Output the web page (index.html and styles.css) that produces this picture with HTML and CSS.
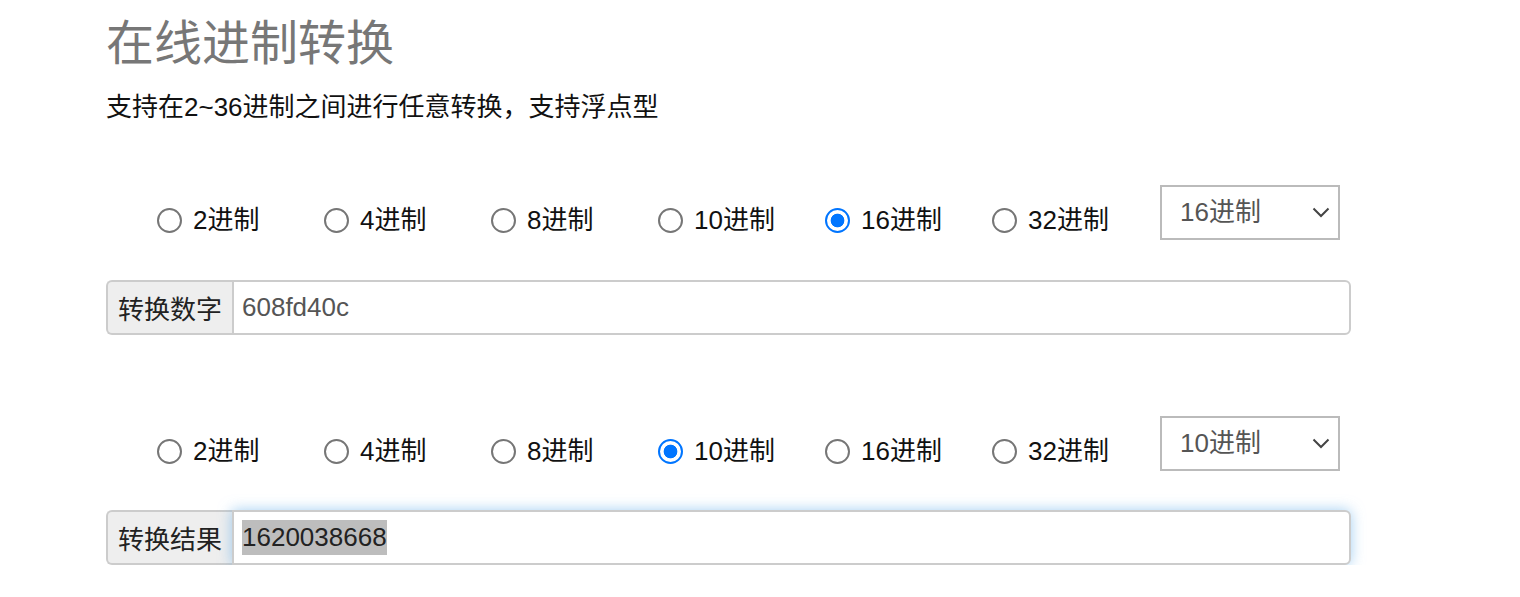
FILE: index.html
```html
<!DOCTYPE html>
<html lang="zh-CN">
<head>
  <meta charset="UTF-8" />
  <meta name="viewport" content="width=device-width, initial-scale=1.0"/>
  <title>在线进制转换</title>
  <link rel="stylesheet" href="styles.css">
</head>
<body>

  <div class="converter">
    <h1 class="title">在线进制转换</h1>
    <p class="lead">支持在2~36进制之间进行任意转换，支持浮点型</p>

    <div class="base-row">
      <label class="base-option"><input type="radio" name="from" value="2" /> 2进制</label>
      <label class="base-option"><input type="radio" name="from" value="4" /> 4进制</label>
      <label class="base-option"><input type="radio" name="from" value="8" /> 8进制</label>
      <label class="base-option"><input type="radio" name="from" value="10" /> 10进制</label>
      <label class="base-option"><input type="radio" name="from" value="16" checked /> 16进制</label>
      <label class="base-option"><input type="radio" name="from" value="32" /> 32进制</label>
      <div class="select-wrap">
        <select id="fromBase">
          <option value="2">2进制</option>
          <option value="8">8进制</option>
          <option value="10">10进制</option>
          <option value="16" selected>16进制</option>
          <option value="32">32进制</option>
        </select>
        <svg class="chevron" width="18" height="11" viewBox="0 0 18 11"><path d="M1.5 1.5 L9 9 L16.5 1.5" fill="none" stroke="#444" stroke-width="2"/></svg>
      </div>
    </div>

    <div class="input-group">
      <span class="addon">转换数字</span>
      <input type="text" id="number" class="field" value="608fd40c" />
    </div>

    <div class="base-row base-row-to">
      <label class="base-option"><input type="radio" name="to" value="2" /> 2进制</label>
      <label class="base-option"><input type="radio" name="to" value="4" /> 4进制</label>
      <label class="base-option"><input type="radio" name="to" value="8" /> 8进制</label>
      <label class="base-option"><input type="radio" name="to" value="10" checked /> 10进制</label>
      <label class="base-option"><input type="radio" name="to" value="16" /> 16进制</label>
      <label class="base-option"><input type="radio" name="to" value="32" /> 32进制</label>
      <div class="select-wrap">
        <select id="toBase">
          <option value="2">2进制</option>
          <option value="8">8进制</option>
          <option value="10" selected>10进制</option>
          <option value="16">16进制</option>
          <option value="32">32进制</option>
        </select>
        <svg class="chevron" width="18" height="11" viewBox="0 0 18 11"><path d="M1.5 1.5 L9 9 L16.5 1.5" fill="none" stroke="#444" stroke-width="2"/></svg>
      </div>
    </div>

    <div class="input-group input-group-result">
      <span class="addon">转换结果</span>
      <input type="text" id="result" class="field" value="1620038668" />
    </div>
  </div>

  <script>
    const resultEl = document.getElementById("result");
    resultEl.focus();
    resultEl.select();
  </script>
</body>
</html>
```

FILE: styles.css
```css
body {
  margin: 0;
  background: #fff;
  font-family: "Liberation Sans", "Noto Sans CJK SC", sans-serif;
  color: #111;
}

.converter {
  width: 1245px;
  padding-left: 106px;
}

.title {
  margin: 15px 0 0;
  font-size: 48px;
  line-height: 58px;
  font-weight: normal;
  color: #777;
}

.lead {
  margin: 16px 0 0;
  font-size: 26px;
  line-height: 36px;
  color: #111;
}

.base-row {
  display: flex;
  align-items: flex-start;
  margin-top: 60px;
  padding-left: 51px;
  height: 55px;
}

.base-row-to {
  margin-top: 81px;
}

.base-option {
  display: flex;
  align-items: center;
  gap: 11px;
  width: 167px;
  flex-shrink: 0;
  margin-top: 17px;
  font-size: 26px;
  line-height: 36px;
  color: #111;
}

.base-option input {
  appearance: none;
  width: 25px;
  height: 25px;
  margin: 0;
  border: 2px solid #767676;
  border-radius: 50%;
  background: #fff;
  box-sizing: border-box;
}

.base-option input:checked {
  border-color: #0075ff;
  background: radial-gradient(circle, #0075ff 0 6.5px, #fff 7.2px);
}

.select-wrap {
  position: relative;
  width: 180px;
  height: 55px;
  margin-left: 1px;
}

.select-wrap select {
  appearance: none;
  width: 100%;
  height: 100%;
  margin: 0;
  padding: 0 0 2px 18px;
  border: 2px solid #bbb;
  border-radius: 0;
  background: #fff;
  font-family: inherit;
  font-size: 26px;
  color: #555;
  box-sizing: border-box;
}

.chevron {
  position: absolute;
  right: 10px;
  top: 22px;
  pointer-events: none;
}

.input-group {
  display: flex;
  height: 55px;
  margin-top: 40px;
}

.input-group-result {
  margin-top: 39px;
}

.addon {
  display: flex;
  align-items: center;
  width: 126px;
  padding-left: 10px;
  border: 2px solid #ccc;
  border-right: none;
  border-radius: 6px 0 0 6px;
  background: #eee;
  font-family: "Noto Sans CJK SC", sans-serif;
  font-size: 26px;
  color: #222;
  box-sizing: border-box;
}

.field {
  flex: 1;
  min-width: 0;
  margin: 0;
  padding: 0 8px;
  border: 2px solid #ccc;
  border-radius: 0 6px 6px 0;
  background: #fff;
  font-family: inherit;
  font-size: 26px;
  line-height: 35px;
  color: #555;
  box-sizing: border-box;
  outline: none;
}

.field:focus {
  box-shadow: 0 0 14px rgba(102, 175, 233, 0.6);
}

.field::selection {
  background: #bdbdbd;
  color: #222;
}
```
